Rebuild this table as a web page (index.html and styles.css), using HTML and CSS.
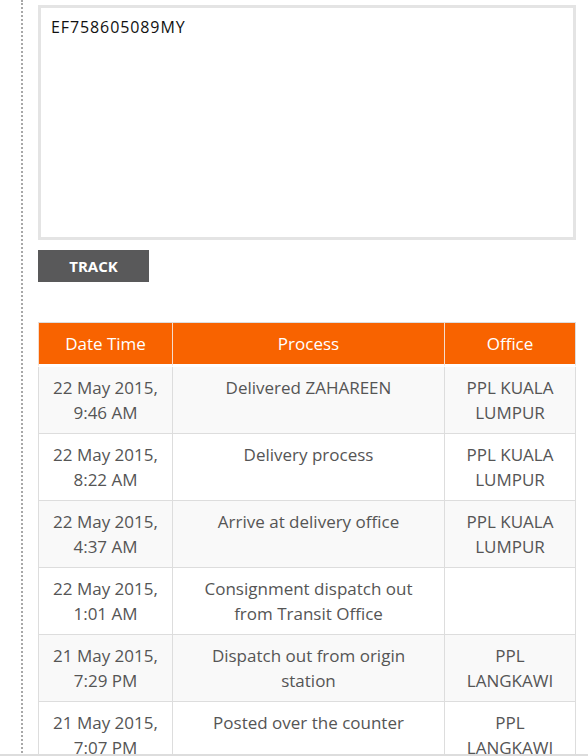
FILE: index.html
```html
<!DOCTYPE html>
<html lang="en">
<head>
<meta charset="utf-8">
<title>Track</title>
<link rel="stylesheet" href="styles.css">
</head>
<body>
<div class="page">
  <div class="content">
    <div class="tracking-input">EF758605089MY</div>
    <button class="track-btn" type="button">TRACK</button>
    <table class="results">
      <colgroup>
        <col class="c-date">
        <col class="c-process">
        <col class="c-office">
      </colgroup>
      <thead>
        <tr><th>Date Time</th><th>Process</th><th>Office</th></tr>
      </thead>
      <tbody>
        <tr><td>22 May 2015,<br>9:46 AM</td><td>Delivered ZAHAREEN</td><td>PPL KUALA LUMPUR</td></tr>
        <tr><td>22 May 2015,<br>8:22 AM</td><td>Delivery process</td><td>PPL KUALA LUMPUR</td></tr>
        <tr><td>22 May 2015,<br>4:37 AM</td><td>Arrive at delivery office</td><td>PPL KUALA LUMPUR</td></tr>
        <tr><td>22 May 2015,<br>1:01 AM</td><td>Consignment dispatch out from Transit Office</td><td></td></tr>
        <tr><td>21 May 2015,<br>7:29 PM</td><td>Dispatch out from origin station</td><td>PPL LANGKAWI</td></tr>
        <tr><td>21 May 2015,<br>7:07 PM</td><td>Posted over the counter</td><td>PPL LANGKAWI</td></tr>
      </tbody>
    </table>
  </div>
</div>
<div class="bottom-edge"></div>
</body>
</html>
```
FILE: styles.css
```css
html, body {
  margin: 0;
  padding: 0;
  background: #fff;
}
body {
  font-family: "Open Sans", "Noto Sans", sans-serif;
  color: #555;
  overflow: hidden;
}
.page {
  margin-left: 21px;
  border-left: 2px dotted #a8a8a8;
  min-height: 100vh;
  padding-left: 15px;
  padding-right: 12px;
}
.content {
  padding-top: 5px;
  width: 538px;
}
.tracking-input {
  box-sizing: border-box;
  height: 235px;
  border: 3px solid #e4e4e4;
  padding: 9px 10px;
  font-size: 16px;
  line-height: 20px;
  letter-spacing: 0.9px;
  color: #111;
  background: #fff;
}
.track-btn {
  display: block;
  margin-top: 10px;
  width: 111px;
  height: 32px;
  border: 0;
  padding: 0;
  background: #59595a;
  color: #fff;
  font-family: "Open Sans", "Noto Sans", sans-serif;
  font-weight: 700;
  font-size: 15px;
}
.results {
  margin-top: 40px;
  width: 538px;
  table-layout: fixed;
  border-collapse: separate;
  border-spacing: 0;
  font-size: 17px;
  line-height: 25px;
}
.c-date { width: 135px; }
.c-process { width: 272px; }
.c-office { width: 131px; }
.results th {
  background: #f86300;
  color: #fff;
  font-weight: 400;
  height: 41px;
  padding: 0 8px;
  border-top: 1px solid #ddd;
  border-right: 1px solid #f6dccb;
  border-bottom: 3px solid #fff;
  text-align: center;
  vertical-align: middle;
}
.results th:first-child {
  border-left: 1px solid #f6dccb;
}
.results th:last-child {
  border-right: 1px solid #ddd;
}
.results td {
  padding: 8px 12px;
  border-right: 1px solid #ddd;
  border-bottom: 1px solid #ddd;
  text-align: center;
  vertical-align: top;
}
.results td:first-child {
  border-left: 1px solid #ddd;
}
.results tbody tr:nth-child(odd) td {
  background: #f9f9f9;
}
.bottom-edge {
  position: fixed;
  left: 0;
  right: 0;
  bottom: 0;
  height: 2px;
  background: #ddd;
}
```
